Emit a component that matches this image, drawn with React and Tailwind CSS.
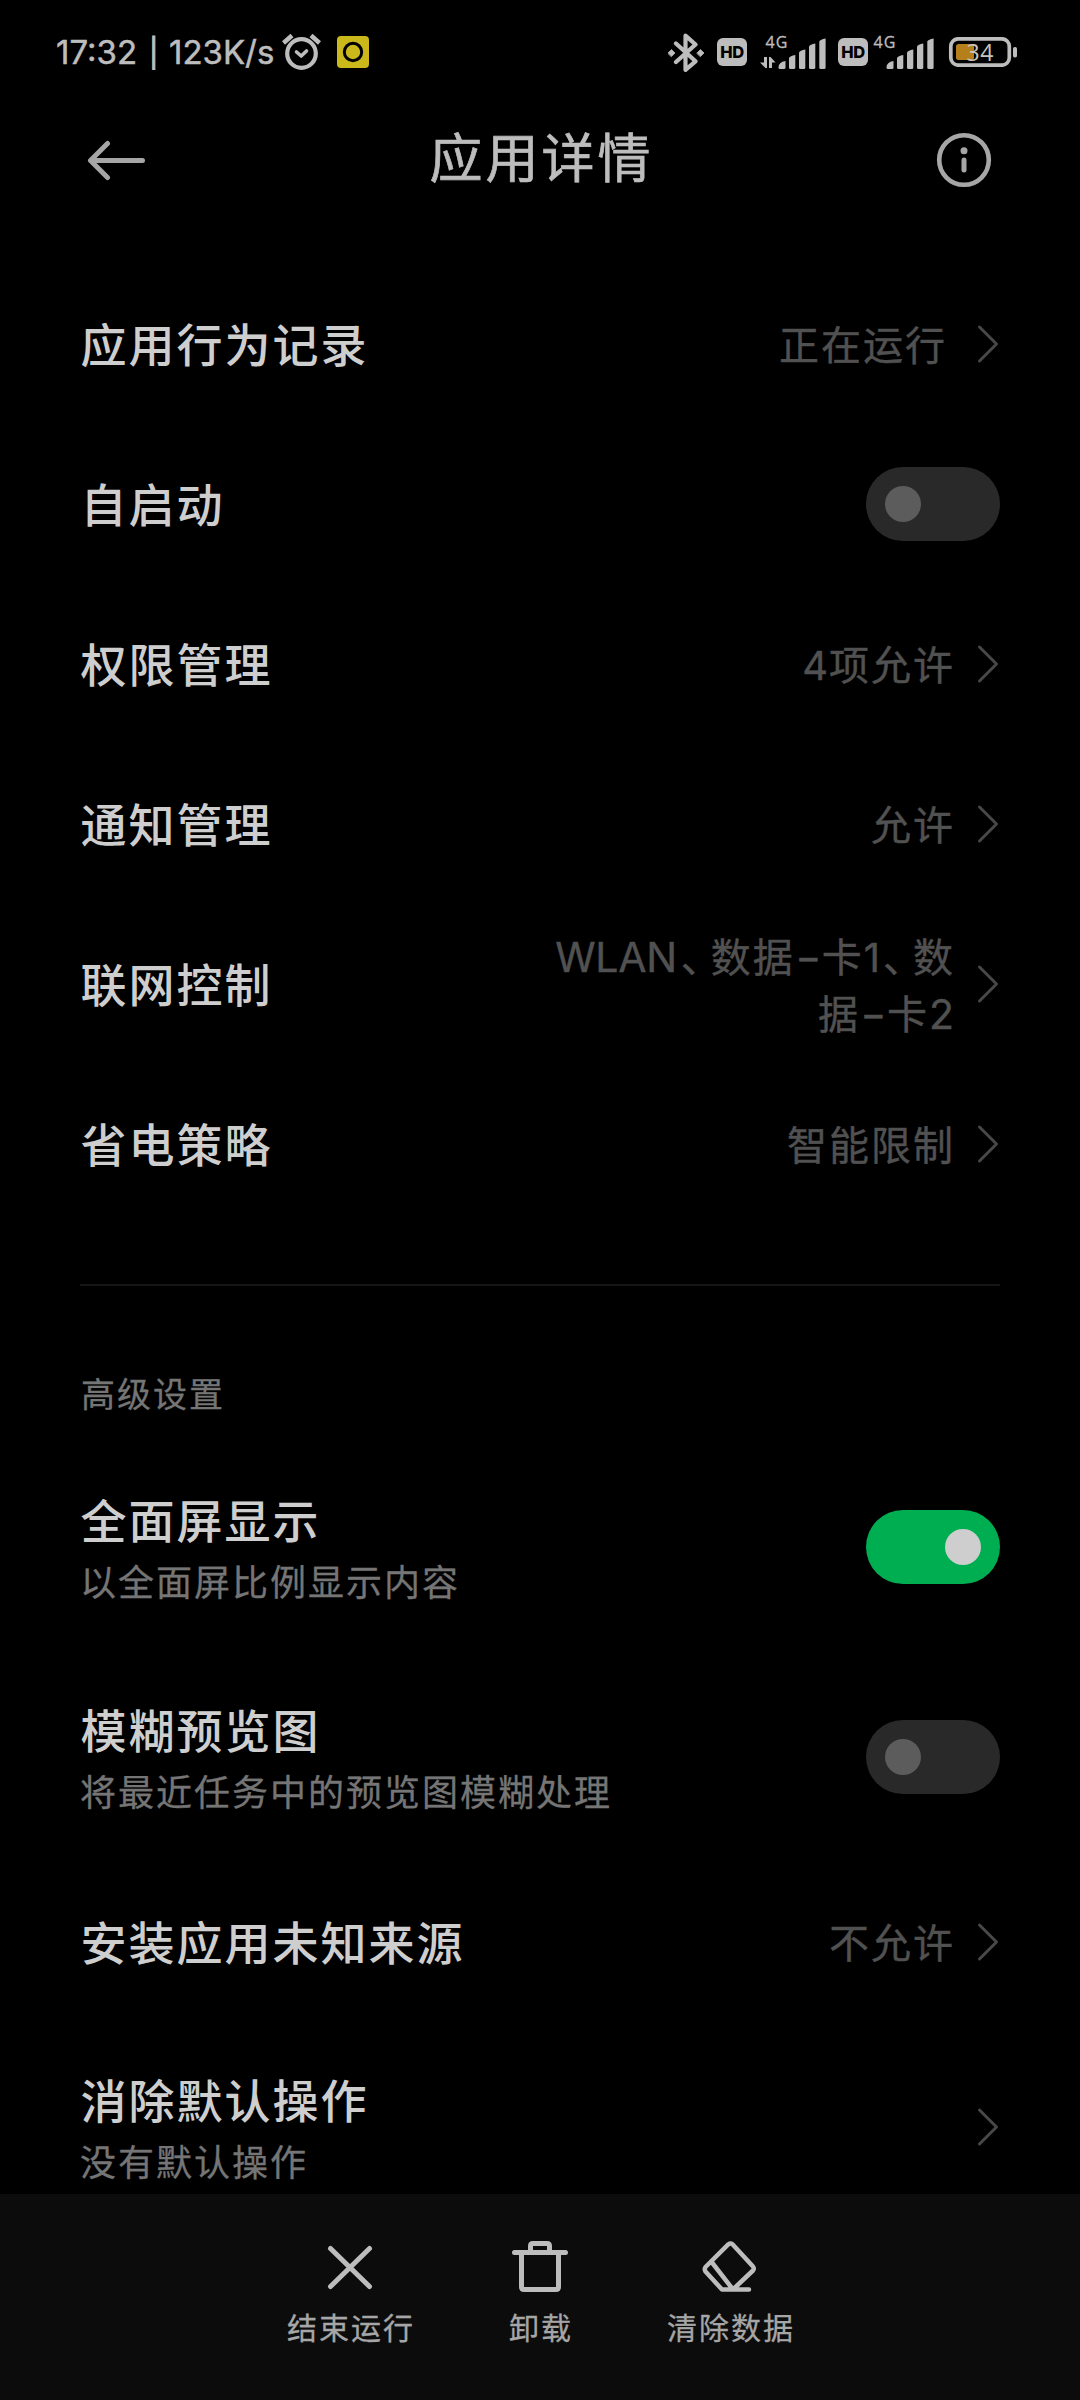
import React from 'react';

function AlarmIcon() {
  return (
    <svg className="h-[38px] w-[40px] shrink-0" viewBox="281 33 40 38" fill="none" stroke="#bdbdbd" strokeLinecap="round" strokeLinejoin="round">
      <circle cx="301.500" cy="53.5" r="14.3" strokeWidth="4.200" />
      <path d="M283.500 43L292 35.500M319.500 43L311 35.500" strokeWidth="4.500" strokeLinecap="butt" />
      <path d="M296.500 52L301.200 56L306.500 51" strokeWidth="3.600" />
    </svg>
  );
}

function RecorderIcon() {
  return (
    <svg className="ml-4 size-8 shrink-0" viewBox="0 0 32 32">
      <rect width="32" height="32" rx="4" fill="#cbb91c" />
      <circle cx="16" cy="16" r="8.700" fill="none" stroke="#000" strokeWidth="3" />
    </svg>
  );
}

function BluetoothIcon() {
  return (
    <svg className="h-10 w-9 shrink-0" viewBox="668 31 36 40" fill="none" stroke="#bdbdbd" strokeWidth="4.200" strokeLinejoin="round" strokeLinecap="round">
      <path d="M676 42.500L695.500 60.300L685.500 68.800V34.700L695.500 43.500L676 61" />
      <path d="M668 52L671.500 48.600L675 52L671.500 55.400Z M697 52L700.500 48.600L704 52L700.500 55.400Z" fill="#bdbdbd" strokeWidth="0.8" />
    </svg>
  );
}

function HdBadge({ className }) {
  return (
    <div className={`flex h-7 w-[30px] shrink-0 items-center justify-center rounded-[6px] bg-[#bdbdbd] font-[Inter] text-[16.500px] leading-none font-extrabold tracking-[-0.5px] text-black ${className}`}>
      HD
    </div>
  );
}

function Signal({ data, className }) {
  return (
    <svg className={`h-12 w-[68px] shrink-0 ${className}`} viewBox="760 27 68 48" fill="#bdbdbd">
      <text x="765.500" y="47" fontSize="16" fontFamily="Open Sans, sans-serif" textLength="22" stroke="#bdbdbd" strokeWidth="0.3">4G</text>
      {data && <path d="M764 56h3v11h-1.500l-5.500-5.500h4z M769 67v-11h1.500l5 5.500h-3.500v5.500z" />}
      <path d="M778.500 66.500q0-5.500 7-6.500v6.500q0 1.500-1.500 1.500h-4q-1.500 0-1.500-1.500z" />
      <path d="M789 57q1-2 6.300-3v12.500q0 1.500-1.500 1.500h-3.300q-1.500 0-1.500-1.500z" />
      <path d="M799 51.500q1-2 6.300-3v18q0 1.500-1.500 1.500h-3.300q-1.500 0-1.500-1.500z" />
      <path d="M809 45.500q1-2 6.300-3v24q0 1.500-1.500 1.500h-3.300q-1.500 0-1.500-1.500z" />
      <path d="M819.300 40.500q1-2 6.300-3v29q0 1.500-1.500 1.500h-3.300q-1.500 0-1.500-1.500z" />
    </svg>
  );
}

function Battery() {
  return (
    <svg className="ml-[12px] h-[30px] w-[70px] shrink-0" viewBox="948 37 70 30">
      <rect x="950.800" y="38.800" width="58.500" height="26.400" rx="7.500" fill="none" stroke="#bdbdbd" strokeWidth="3.700" />
      <rect x="1013" y="47" width="4" height="10.500" rx="1.800" fill="#bdbdbd" />
      <rect x="956" y="44" width="18" height="16" rx="2.500" fill="#b57f1b" />
      <text x="966.500" y="60.900" fontSize="23" fontFamily="Open Sans, sans-serif" fill="#c8c4bc" textLength="27">34</text>
    </svg>
  );
}

function StatusBar() {
  return (
    <div className="flex h-[104px] items-center pl-[56px]">
      <div className="flex w-[225px] items-center pt-px font-[Inter] text-[33px] leading-none whitespace-nowrap text-[#bdbdbd] [-webkit-text-stroke:0.5px]">
        <span className="w-[93px]">17:32</span>
        <span className="w-[20px] text-[28px] [-webkit-text-stroke:1px]">|</span>
        <span>123K/s</span>
      </div>
      <AlarmIcon />
      <RecorderIcon />
      <div className="ml-auto flex items-center pr-[62px]">
        <BluetoothIcon />
        <HdBadge className="ml-[13px]" />
        <Signal data className="ml-[13px]" />
        <HdBadge className="ml-[10px]" />
        <Signal className="ml-0" />
        <Battery />
      </div>
    </div>
  );
}

function Header() {
  return (
    <header className="flex h-28 items-center justify-between pr-[88px] pl-[87px]">
      <svg className="h-11 w-[60px]" viewBox="87 138 60 44" fill="none" stroke="#a6a6a6" strokeWidth="5" strokeLinecap="round" strokeLinejoin="round">
        <path d="M142.500 160.500H91M107.500 143.500L90.500 160.500L107.500 177.500" />
      </svg>
      <h1 className="-mt-[2px] text-[53px] leading-none tracking-[3px] text-[#bdbdbd] [-webkit-text-stroke:0.7px]">应用详情</h1>
      <svg className="size-14" viewBox="0 0 56 56">
        <circle cx="28" cy="28" r="24.800" fill="none" stroke="#a6a6a6" strokeWidth="4.600" />
        <circle cx="28" cy="18.800" r="3.500" fill="#a6a6a6" />
        <rect x="25.500" y="25.500" width="5" height="15" rx="2.500" fill="#a6a6a6" />
      </svg>
    </header>
  );
}

function Chevron() {
  return (
    <svg className="h-10 w-6 shrink-0" viewBox="0 0 24 40" fill="none" stroke="#484848" strokeWidth="3" strokeLinecap="round" strokeLinejoin="round">
      <path d="M3.500 3L20.500 20L3.500 37" />
    </svg>
  );
}

function Toggle({ on }) {
  return (
    <div className={on ? 'flex h-[74px] w-[134px] items-center justify-end rounded-full bg-[#00ae52] px-[19px]' : 'flex h-[74px] w-[134px] items-center rounded-full bg-[#292929] px-[19px]'}>
      <div className={on ? 'size-9 rounded-full bg-[#cecece]' : 'size-9 rounded-full bg-[#5c5c5c]'} />
    </div>
  );
}

function Row({ title, sub, value, inset, children }) {
  return (
    <div className={sub ? 'flex h-[210px] shrink-0 items-center justify-between' : 'flex h-40 shrink-0 items-center justify-between'}>
      <div className={sub ? 'flex flex-col pt-[10px]' : 'flex flex-col pt-px'}>
        <div className="pl-[0.500px] text-[46px] leading-[62px] font-medium tracking-[2px] text-[#cecece]">{title}</div>
        {sub && <div className="text-[36px] leading-[62px] tracking-[2px] text-[#757575] [-webkit-text-stroke:0.3px]">{sub}</div>}
      </div>
      {children || (
        <div className="flex items-center">
          <div className={inset ? 'mr-[29px] pt-[4px] text-right text-[40px] leading-[56px] tracking-[2px] text-[#515151] [-webkit-text-stroke:0.4px]' : 'mr-[21px] pt-[4px] text-right text-[40px] leading-[56px] tracking-[2px] text-[#515151] [-webkit-text-stroke:0.4px]'}>{value}</div>
          <Chevron />
        </div>
      )}
    </div>
  );
}

function Comma() {
  return <span className="inline-block w-[34px] pl-[4px] text-left tracking-normal [font-feature-settings:'halt']">、</span>;
}

function Dash() {
  return <span className="inline-block w-[27px] scale-x-[1.4] text-center tracking-normal">-</span>;
}

function NetworkValue() {
  return (
    <>
      <span className="text-[41px] tracking-[-0.300px]">WLAN</span><Comma />数据<Dash />卡<span className="tracking-[-1px]">1</span><Comma />数
      <br />
      据<Dash />卡<span className="text-[41px] tracking-[1px]">2</span>
    </>
  );
}

function Action({ label, children }) {
  return (
    <div className="flex w-[190px] flex-col items-center">
      <svg className="size-[60px]" viewBox="0 0 60 60" fill="none" stroke="#bdbdbd" strokeWidth="5" strokeLinecap="round" strokeLinejoin="round">
        {children}
      </svg>
      <div className="mt-[9px] ml-[2px] text-[30px] leading-[44px] tracking-[2px] text-[#a6a6a6] [-webkit-text-stroke:0.3px]">{label}</div>
    </div>
  );
}

export default function App() {
  return (
    <div className="flex h-[2400px] w-[1080px] flex-col overflow-hidden bg-black font-[Inter,'Noto_Sans_CJK_SC',sans-serif]">
      <StatusBar />
      <Header />
      <main className="flex h-[1978px] shrink-0 flex-col overflow-hidden px-20 pt-[48px]">
        <Row title="应用行为记录" value="正在运行" inset />
        <Row title="自启动"><Toggle /></Row>
        <Row title="权限管理" value={<><span className="tracking-[1px]">4</span>项允许</>} />
        <Row title="通知管理" value="允许" />
        <Row title="联网控制" value={<NetworkValue />} />
        <Row title="省电策略" value="智能限制" />
        <div className="mt-[60px] h-[2px] shrink-0 bg-[#151515]" />
        <div className="mt-[84px] mb-[22px] shrink-0 pl-px text-[34px] leading-[50px] tracking-[2px] text-[#757575] [-webkit-text-stroke:0.3px]">高级设置</div>
        <Row title="全面屏显示" sub="以全面屏比例显示内容"><Toggle on /></Row>
        <Row title="模糊预览图" sub="将最近任务中的预览图模糊处理"><Toggle /></Row>
        <Row title="安装应用未知来源" value="不允许" />
        <Row title="消除默认操作" sub="没有默认操作" value="" />
      </main>
      <footer className="flex h-[206px] shrink-0 justify-center bg-[#0c0c0c] pt-[43px]">
        <Action label="结束运行">
          <path d="M10.500 11.500L49.500 49.500M49.500 11.500L10.500 49.500" />
        </Action>
        <Action label="卸载">
          <path d="M4.500 15.500H55.500M11.500 15.500V50q0 2.500 2.500 2.500H46q2.500 0 2.500-2.500V15.500M20.500 15V9q0-2.500 2.500-2.500H37q2.500 0 2.500 2.500V15" />
        </Action>
        <Action label="清除数据">
          <path d="M28.500 7.200q2-1.500 4 0L53 29.500q1.500 2 0 4L33 52.500H22L5.500 34.500q-1.500-2.500 0-4.500ZM12 25.500L33 52.500H49" strokeWidth="4.500" />
        </Action>
      </footer>
    </div>
  );
}
